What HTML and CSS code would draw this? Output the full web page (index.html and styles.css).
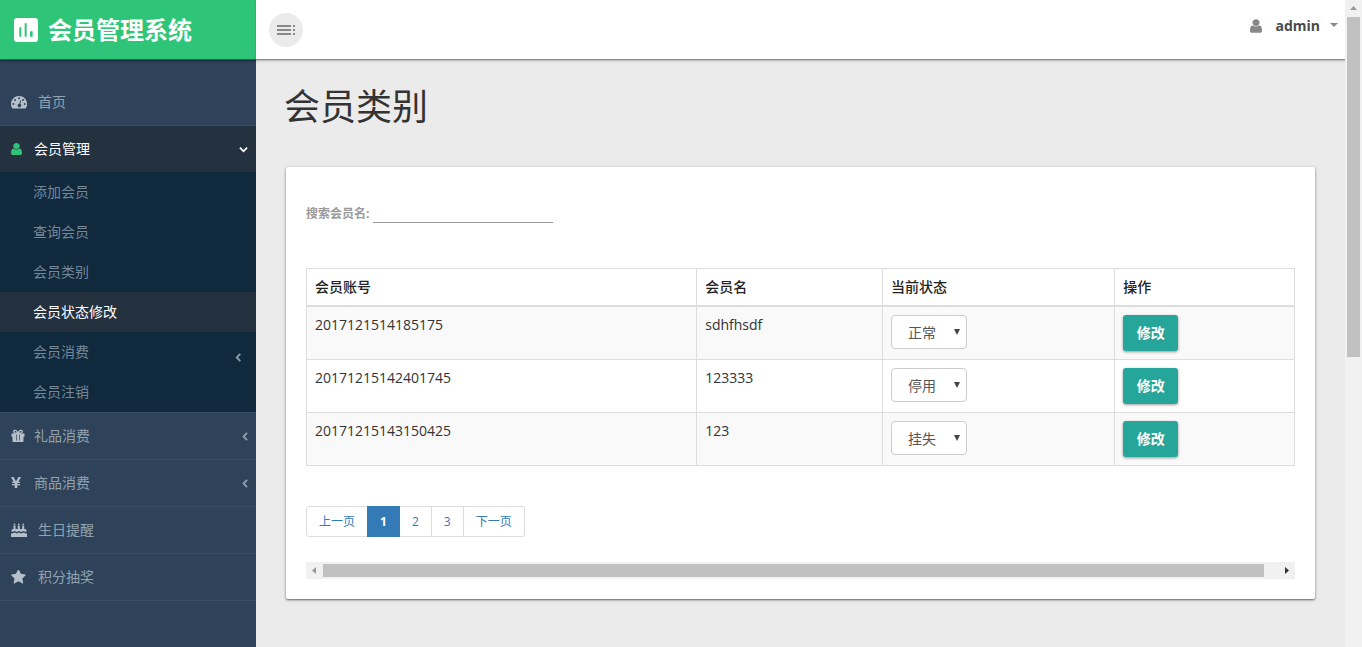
FILE: index.html
```html
<!DOCTYPE html>
<html lang="zh-CN">
<head>
<meta charset="utf-8">
<title>会员管理系统</title>
<link rel="stylesheet" href="styles.css">
</head>
<body>
<aside class="sidebar">
  <div class="brand">
    <svg class="brand-icon" viewBox="0 0 24 24"><path d="M19 3H5c-1.100 0-2 .9-2 2v14c0 1.100.9 2 2 2h14c1.100 0 2-.9 2-2V5c0-1.100-.9-2-2-2zM8.500 17H7v-7h1.500v7zm4 0H11V7h1.500v10zm4.500 0h-2v-4h2v4z"/></svg>
    <span>会员管理系统</span>
  </div>
  <nav class="menu">
    <a class="item wide" href="#">
      <svg class="icon-wide" viewBox="0 0 16 14"><path fill-rule="evenodd" d="M8 1a8 8 0 0 0-6.800 12.200q.2.300.6.300h12.400q.4 0 .6-.3A8 8 0 0 0 8 1zM2.300 8a1 1 0 1 1 0 2 1 1 0 0 1 0-2zM4 4a1 1 0 1 1 0 2 1 1 0 0 1 0-2zM8 2.300a1 1 0 1 1 0 2 1 1 0 0 1 0-2zM12 4a1 1 0 1 1 0 2 1 1 0 0 1 0-2zM13.700 8a1 1 0 1 1 0 2 1 1 0 0 1 0-2zM9.300 5.200l.9.200-.9 3.600a1.700 1.700 0 1 1-1-.2z"/></svg>
      <span>首页</span>
    </a>
    <a class="item active" href="#">
      <svg class="icon" viewBox="0 0 1280 1792" preserveAspectRatio="none"><path d="M1280 1399q0 109-62.500 187t-150.500 78h-854q-88 0-150.500-78t-62.500-187q0-85 8.500-160.500t31.500-152 58.500-131 94-89 134.500-34.500q131 128 313 128t313-128q76 0 134.500 34.500t94 89 58.500 131 31.500 152 8.500 160.500zm-256-887q0 159-112.500 271.500t-271.500 112.500-271.500-112.500-112.500-271.500 112.500-271.500 271.500-112.500 271.500 112.500 112.500 271.500z"/></svg>
      <span>会员管理</span>
      <svg class="chevron down" viewBox="0 0 10 10"><path d="M1 3l4 4 4-4"/></svg>
    </a>
    <div class="submenu">
      <a href="#">添加会员</a>
      <a href="#">查询会员</a>
      <a href="#">会员类别</a>
      <a class="current" href="#">会员状态修改</a>
      <a href="#">会员消费<svg class="chevron low" viewBox="0 0 10 10"><path d="M7 1L3 5l4 4"/></svg></a>
      <a href="#">会员注销</a>
    </div>
    <a class="item" href="#">
      <svg class="icon-mid" viewBox="0 0 14 14"><path fill-rule="evenodd" d="M.5 4.500h4.200C3 4.500 2 3.800 2 2.600S2.900.8 4.200.8C5.600.8 6.400 2 7 3 7.600 2 8.400.8 9.800.8 11.100.8 12 1.400 12 2.600s-1 1.900-2.700 1.900h4.200v3.200h-1v4.600q0 .7-.7.700H2.200q-.7 0-.7-.7V7.700h-1zM4.200 2a.8.800 0 0 0 0 1.600h1.600C5.300 2.700 4.800 2 4.200 2zM9.800 2c-.6 0-1.100.7-1.600 1.600h1.600a.8.800 0 0 0 0-1.600zM5 5.500v6h.7v-6zM8.300 5.500v6h.7v-6z"/></svg>
      <span>礼品消费</span>
      <svg class="chevron" viewBox="0 0 10 10"><path d="M9 1L5 5l4 4"/></svg>
    </a>
    <a class="item" href="#">
      <svg class="icon" viewBox="0 0 11 14"><path d="M0 1h2.600L5 5.600 7.400 1H10L7.400 5.700H9V7H6.300v1H9v1.300H6.300V12H3.700V9.300H1V8h2.700V7H1V5.700h1.600z"/></svg>
      <span>商品消费</span>
      <svg class="chevron" viewBox="0 0 10 10"><path d="M9 1L5 5l4 4"/></svg>
    </a>
    <a class="item wide" href="#">
      <svg class="icon-wide" viewBox="0 0 16 14"><path d="M2.500 2.500h2V6h2.300V2.500h2V6h2.400V2.500h2V6h.8q1.500 0 1.500 1.500v1c-1.500 1-2-.5-3-.5s-1.500 1-2.400 1S8.800 8 8 8s-1.200 1-2.200 1S4.200 8 3.400 8 2 9.300.5 8.500v-1Q.5 6 2 6h.5zM2.500 2L3.500 0l1 2zM6.800 2l1-2 1 2zM11.200 2l1-2 1 2zM0 14v-3.700c1.500.8 2.400-.9 3.400-.9s1.500 1 2.400 1S7.200 9.400 8 9.400s1.300 1 2.200 1 1.500-1 2.300-1c1 0 2 1.600 3.500.9V14z"/></svg>
      <span>生日提醒</span>
    </a>
    <a class="item wide" href="#">
      <svg class="icon-wide" viewBox="0 100 1792 1568"><path d="M1664 647q0 22-26 48l-363 354 86 500q1 7 1 20 0 21-10.500 35.500t-30.500 14.500q-19 0-40-12l-449-236-449 236q-22 12-40 12-21 0-31.500-14.500t-10.500-35.500q0-6 2-20l86-500-364-354q-25-27-25-48 0-37 56-46l502-73 225-455q19-41 49-41t49 41l225 455 502 73q56 9 56 46z"/></svg>
      <span>积分抽奖</span>
    </a>
  </nav>
</aside>
<main class="main">
  <header class="topbar">
    <button class="toggle" type="button" aria-label="菜单"><svg viewBox="0 0 24 24"><path d="M3 9h14V7H3v2zm0 4h14v-2H3v2zm0 4h14v-2H3v2zm16 0h2v-2h-2v2zm0-10v2h2V7h-2zm0 6h2v-2h-2v2z"/></svg></button>
    <a class="user" href="#">
      <svg class="user-icon" viewBox="0 0 1280 1792" preserveAspectRatio="none"><path d="M1280 1399q0 109-62.500 187t-150.500 78h-854q-88 0-150.500-78t-62.500-187q0-85 8.500-160.500t31.500-152 58.500-131 94-89 134.500-34.500q131 128 313 128t313-128q76 0 134.500 34.500t94 89 58.500 131 31.500 152 8.500 160.500zm-256-887q0 159-112.500 271.500t-271.500 112.500-271.500-112.500-112.500-271.500 112.500-271.500 271.500-112.500 271.500 112.500 112.500 271.500z"/></svg>
      <span>admin</span>
      <svg class="caret" viewBox="0 0 8 4"><path d="M0 0h8L4 4z"/></svg>
    </a>
  </header>
  <div class="content">
    <h1>会员类别</h1>
    <section class="card">
      <form class="search">
        <label for="member">搜索会员名:</label>
        <input id="member" type="text">
      </form>
      <table>
        <thead>
          <tr><th class="c-account">会员账号</th><th class="c-name">会员名</th><th class="c-state">当前状态</th><th class="c-action">操作</th></tr>
        </thead>
        <tbody>
          <tr><td>2017121514185175</td><td>sdhfhsdf</td><td><span class="select"><select aria-label="当前状态"><option selected>正常</option><option>停用</option><option>挂失</option></select></span></td><td><button class="edit" type="button">修改</button></td></tr>
          <tr><td>20171215142401745</td><td>123333</td><td><span class="select"><select aria-label="当前状态"><option>正常</option><option selected>停用</option><option>挂失</option></select></span></td><td><button class="edit" type="button">修改</button></td></tr>
          <tr><td>20171215143150425</td><td>123</td><td><span class="select"><select aria-label="当前状态"><option>正常</option><option>停用</option><option selected>挂失</option></select></span></td><td><button class="edit" type="button">修改</button></td></tr>
        </tbody>
      </table>
      <nav class="pages">
        <a href="#">上一页</a><a class="on" href="#">1</a><a href="#">2</a><a href="#">3</a><a href="#">下一页</a>
      </nav>
      <div class="hbar">
        <svg class="arrow faint" viewBox="0 0 17 17"><path d="M10 5v7L6 8.500z"/></svg>
        <div class="htrack"><div class="hthumb"></div></div>
        <svg class="arrow" viewBox="0 0 17 17"><path d="M7 5v7l4-3.500z"/></svg>
      </div>
    </section>
  </div>
</main>
<div class="vbar">
  <svg class="arrow faint" viewBox="0 0 17 17"><path d="M5 10h7L8.500 6z"/></svg>
  <div class="vthumb"></div>
</div>
</body>
</html>
```
FILE: styles.css
```css
* { box-sizing: border-box; }
body {
  margin: 0;
  min-height: 100vh;
  display: flex;
  background: #ebebeb;
  color: #333;
  font: 14px/20px "Open Sans", "Noto Sans CJK SC", sans-serif;
}
a { text-decoration: none; color: inherit; }
svg { flex: none; fill: currentColor; }
button, input, select { font: inherit; }

.sidebar { width: 256px; flex: none; background: #2e4359; color: #93a2b0; }
.brand {
  height: 60px;
  padding: 0 10px;
  display: flex;
  align-items: center;
  gap: 6px;
  background: #2fc578;
  border-bottom: 1px solid #24624f;
  box-shadow: 0 1px 2px rgba(0, 0, 0, .4);
  color: #fff;
  font-size: 24px;
  font-weight: 700;
}
.brand-icon { width: 32px; height: 32px; }
.menu { padding-top: 19px; }
.item {
  height: 47px;
  padding: 0 8px 0 11px;
  display: flex;
  align-items: center;
  gap: 12px;
  border-bottom: 1px solid #384e65;
}
.item.wide { gap: 11px; }
.item svg { color: #b5c0ca; }
.icon { width: 11px; height: 14px; }
.icon-mid { width: 14px; height: 14px; margin-right: -3px; }
.icon-wide { width: 16px; height: 14px; }
.item .chevron, .chevron {
  width: 9px;
  height: 9px;
  margin-left: auto;
  fill: none;
  stroke: currentColor;
  stroke-width: 2;
  color: #8f9eac;
}
.item.active { height: 46px; border: 0; background: #24313f; color: #fff; }
.item.active .icon { color: #2fc578; }
.item.active .chevron { color: #fff; }
.submenu { background: #10293d; color: #74889a; border-bottom: 1px solid #384e65; }
.submenu a { height: 40px; padding: 0 13px 0 33px; display: flex; align-items: center; }
.submenu .current { background: #24313f; color: #fff; }
.chevron.low { margin-top: 10px; }

.main { flex: 1; min-width: 0; }
.topbar {
  height: 60px;
  padding: 0 7px 0 13px;
  display: flex;
  align-items: center;
  justify-content: space-between;
  background: #fff;
  border-bottom: 1px solid #888;
  box-shadow: 0 1px 2px rgba(0, 0, 0, .25);
}
.toggle {
  width: 34px;
  height: 34px;
  padding: 5px;
  border: 0;
  border-radius: 50%;
  background: #ebebeb;
  color: #888;
}
.toggle svg { display: block; width: 24px; height: 24px; }
.user { display: flex; align-items: center; padding-bottom: 8px; font-weight: 700; color: #4a4a4a; }
.user-icon { width: 12px; height: 16px; margin-right: 13px; color: #888; }
.caret { width: 8px; height: 4px; margin: 0 0 2px 10px; color: #888; }

.content { padding: 27px 30px 47px 28px; }
h1 { margin: 0 0 40px; font-size: 36px; line-height: 40px; font-weight: 400; }
.card {
  margin-left: 2px;
  padding: 28px 20px 20px;
  background: #fff;
  border-radius: 2px;
  box-shadow: 0 1px 2px rgba(0, 0, 0, .5), 0 1px 4px rgba(0, 0, 0, .14);
}
.search { display: flex; align-items: center; gap: 4px; margin-bottom: 45px; }
.search label { padding-top: 10px; font-size: 12px; line-height: 18px; font-weight: 700; color: #999; }
.search input { width: 180px; height: 28px; border: 0; border-bottom: 1px solid #999; background: none; outline: 0; }

table { width: 100%; table-layout: fixed; border-collapse: collapse; }
th, td { padding: 8px; border: 1px solid #ddd; text-align: left; vertical-align: top; }
th { border-bottom-width: 2px; font-weight: 500; color: #222; }
tbody tr:nth-child(odd) { background: #f9f9f9; }
.c-account { width: 39.5%; }
.c-name { width: 18.8%; }
.c-state { width: 23.5%; }
.select { position: relative; display: block; width: 76px; }
.select select {
  display: block;
  width: 100%;
  height: 34px;
  padding: 2px 16px 0;
  appearance: none;
  border: 1px solid #ccc;
  border-radius: 4px;
  background: #fff;
  color: #555;
}
.select::after {
  content: "";
  position: absolute;
  right: 7px;
  top: 14px;
  border: solid transparent;
  border-width: 6px 3px 0;
  border-top-color: #444;
  pointer-events: none;
}
.edit {
  display: block;
  width: 55px;
  height: 36px;
  padding: 0;
  border: 0;
  border-radius: 3px;
  background: #26a69a;
  box-shadow: 0 1px 3px rgba(0, 0, 0, .4);
  color: #fff;
  font-weight: 700;
}

.pages { display: flex; margin: 40px 0 25px; font-size: 12px; line-height: 17px; color: #337ab7; }
.pages a { padding: 6px 12px; border: 1px solid #ddd; border-left-width: 0; }
.pages a:first-child { border-left-width: 1px; border-radius: 3px 0 0 3px; }
.pages a:last-child { border-radius: 0 3px 3px 0; }
.pages .on { background: #337ab7; border-color: #337ab7; border-left-width: 1px; margin-left: -1px; color: #fff; font-weight: 700; }

.hbar { display: flex; height: 17px; background: #f1f1f1; }
.htrack { flex: 1; padding: 2px 0; }
.hthumb { width: 98.5%; height: 100%; background: #c1c1c1; }
.arrow { width: 17px; height: 17px; color: #333; }
.arrow.faint { color: #999; }
.vbar { width: 17px; flex: none; display: flex; flex-direction: column; background: #f1f1f1; }
.vthumb { flex: 0 0 52.5%; margin: 0 2px; background: #c1c1c1; }
```
